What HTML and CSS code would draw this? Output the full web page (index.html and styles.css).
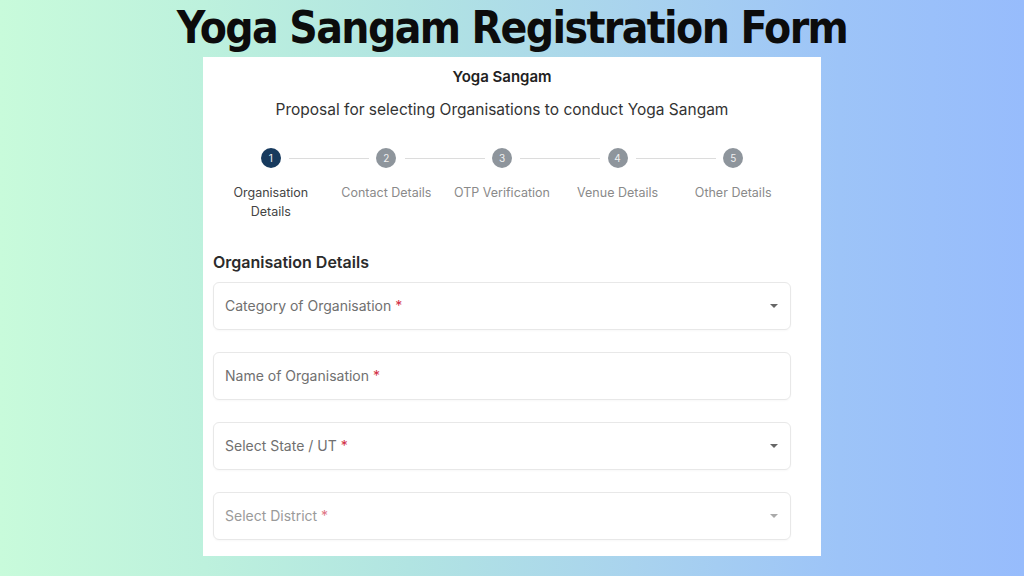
FILE: index.html
```html
<!DOCTYPE html>
<html>
<head>
<meta charset="utf-8">
<link rel="stylesheet" href="styles.css">
</head>
<body>
<div class="page">
  <h1 class="title">Yoga Sangam Registration Form</h1>
  <div class="card">
    <div class="card-inner">
      <div class="brand">Yoga Sangam</div>
      <div class="subtitle">Proposal for selecting Organisations to conduct Yoga Sangam</div>
      <div class="stepper">
        <div class="step active"><div class="dot-row"><span class="dot">1</span></div><div class="label">Organisation Details</div></div>
        <div class="step"><div class="dot-row"><span class="dot">2</span></div><div class="label">Contact Details</div></div>
        <div class="step"><div class="dot-row"><span class="dot">3</span></div><div class="label">OTP Verification</div></div>
        <div class="step"><div class="dot-row"><span class="dot">4</span></div><div class="label">Venue Details</div></div>
        <div class="step last"><div class="dot-row"><span class="dot">5</span></div><div class="label">Other Details</div></div>
      </div>
      <h2 class="section">Organisation Details</h2>
      <div class="fields">
        <div class="field select"><span class="ph">Category of Organisation <span class="req">*</span></span><span class="caret"></span></div>
        <div class="field"><span class="ph">Name of Organisation <span class="req">*</span></span></div>
        <div class="field select"><span class="ph">Select State / UT <span class="req">*</span></span><span class="caret"></span></div>
        <div class="field select disabled"><span class="ph">Select District <span class="req">*</span></span><span class="caret"></span></div>
      </div>
    </div>
  </div>
</div>
</body>
</html>
```
FILE: styles.css
```css
* { box-sizing: border-box; }
html, body { margin: 0; padding: 0; }
body {
  width: 1024px;
  height: 576px;
  overflow: hidden;
  background: linear-gradient(90deg, #c8fbdb 0%, #bdf1dd 20%, #b1e4e2 40%, #a9d3ee 62%, #9dc4f8 82%, #97bcfc 100%);
  font-family: "Inter", "Noto Sans", sans-serif;
}
.page {
  display: flex;
  flex-direction: column;
  align-items: center;
}
.title {
  margin: 0;
  height: 57px;
  padding-top: 2px;
  font-family: "DejaVu Sans Condensed", "DejaVu Sans", sans-serif;
  font-stretch: condensed;
  font-weight: 700;
  font-size: 44px;
  line-height: 52px;
  color: #0c0c0c;
  letter-spacing: -1.6px;
}
.card {
  width: 618px;
  height: 499px;
  background: #fff;
  padding: 0 30px 0 10px;
}
.card-inner {
  display: flex;
  flex-direction: column;
}
.brand {
  text-align: center;
  font-weight: 600;
  font-size: 15px;
  color: #222;
  margin-top: 10px;
  line-height: 20px;
}
.subtitle {
  text-align: center;
  font-size: 15.5px;
  color: #333;
  margin-top: 12px;
  line-height: 22px;
}
.stepper {
  display: flex;
  margin-top: 27px;
}
.step {
  width: 116px;
  display: flex;
  flex-direction: column;
  align-items: center;
}
.dot-row {
  position: relative;
  width: 100%;
  height: 20px;
  display: flex;
  justify-content: center;
}
.step:not(.last) .dot-row::after {
  content: "";
  position: absolute;
  left: 76px;
  width: 80px;
  top: 10px;
  height: 1px;
  background: #dcdcdc;
}
.dot {
  width: 20px;
  height: 20px;
  border-radius: 50%;
  background: #8e959c;
  color: #f0f0f0;
  font-size: 10px;
  line-height: 20px;
  text-align: center;
}
.step.active .dot { background: #173a5e; }
.label {
  margin-top: 15px;
  font-size: 12.5px;
  line-height: 19px;
  color: #8a8a8a;
  text-align: center;
  width: 90px;
}
.step:not(.active) .label { white-space: nowrap; width: auto; }
.step.active .label { color: #444; }
.section {
  margin: 31px 0 0 0;
  font-size: 16px;
  font-weight: 600;
  color: #2b2b2b;
  line-height: 20px;
}
.fields {
  display: flex;
  flex-direction: column;
  gap: 22px;
  margin-top: 10px;
}
.field {
  height: 48px;
  border: 1px solid #e8e8e8;
  border-radius: 6px;
  display: flex;
  align-items: center;
  justify-content: space-between;
  padding: 0 12px 0 11px;
  box-shadow: 0 1px 2px rgba(0,0,0,0.03);
}
.ph {
  font-size: 14px;
  color: #707070;
  margin-top: -2px;
}
.req { color: #d22f45; }
.caret {
  width: 0;
  height: 0;
  border-left: 4px solid transparent;
  border-right: 4px solid transparent;
  border-top: 4px solid #666;
}
.disabled .ph { color: #9a9a9a; }
.disabled .req { color: #e07585; }
.disabled .caret { border-top-color: #aaa; }
```
